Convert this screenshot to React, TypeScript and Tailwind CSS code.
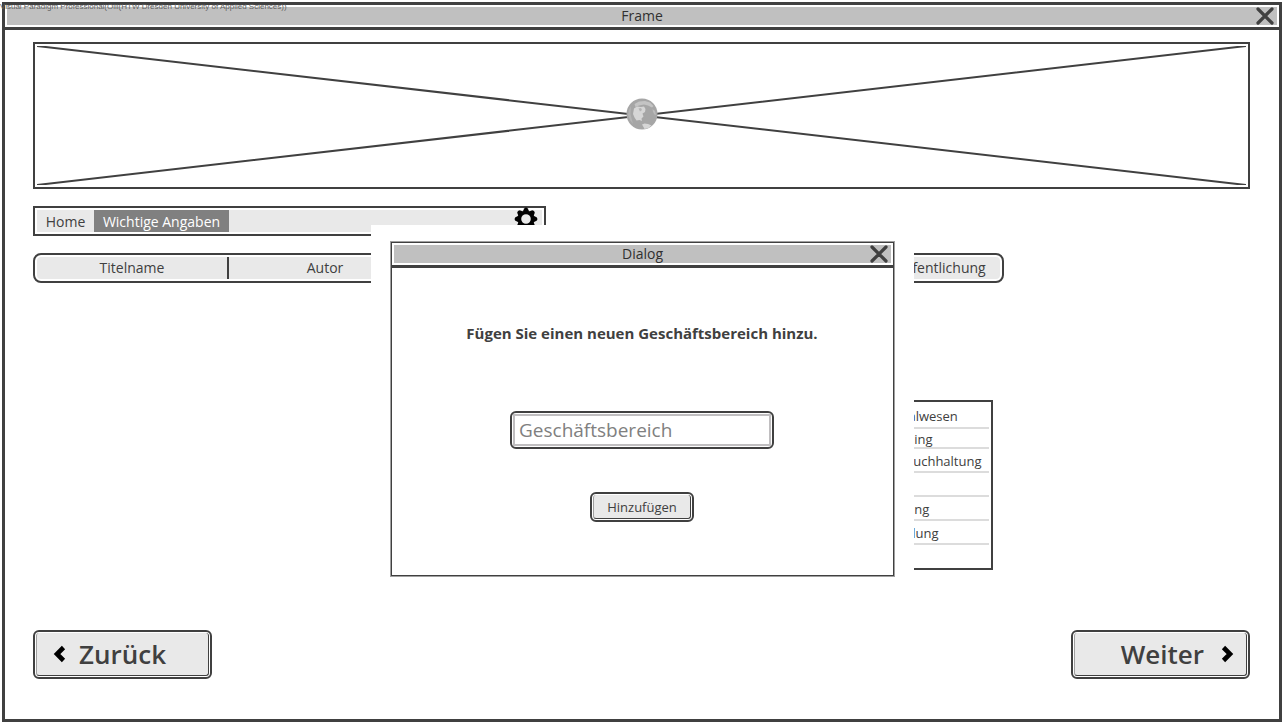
import type { ReactNode } from "react";

const columns = [
  { label: "Titelname", style: "w-[191px]" },
  { label: "Autor", style: "w-[194px] border-l-2" },
  { label: "Verlag", style: "w-[194px] border-l-2" },
  { label: "Jahr", style: "border-l-2" },
  { label: "Veröffentlichung", style: "w-[138px] border-l-2" },
];

const departments = [
  { name: "Personalwesen", style: "h-[27px] border-b-2" },
  { name: "Controlling", style: "h-5 border-b-2" },
  { name: "Finanzbuchhaltung", style: "h-6 border-b-2" },
  { name: "IT", style: "h-6 border-b-2" },
  { name: "Forschung", style: "h-6 border-b-2" },
  { name: "Entwicklung", style: "h-6 border-b-2" },
];

function CloseIcon() {
  return (
    <svg viewBox="0 0 18 18" className="size-[18px]" aria-hidden="true">
      <path d="M2 2 16 16M16 2 2 16" fill="none" stroke="#404040" strokeWidth="3.200" strokeLinecap="round" />
    </svg>
  );
}

function TitleBar({ title }: { title: string }) {
  return (
    <div className="border-b-3 border-[#404040] p-[2px]">
      <div className="grid h-[18px] grid-cols-[1fr_auto_1fr] items-center bg-[#c0c0c0]">
        <h2 className="col-start-2 text-sm leading-[18px] text-[#303030]">{title}</h2>
        <button type="button" aria-label="Schließen" className="mr-[3px] justify-self-end">
          <CloseIcon />
        </button>
      </div>
    </div>
  );
}

function GlobeIcon() {
  return (
    <svg viewBox="0 0 32 32" className="size-8" aria-hidden="true">
      <circle cx="16" cy="16" r="15.5" fill="#a6a6a6" />
      <path d="M8.500 6 13 3.500 19 3 24 4.500 27.500 8 26 9.500 22 7.500 18 6.500 13 7.500 9.500 9Z" fill="#c4c4c4" />
      <path d="M8 10.500 11 8.500 15 9 18 8.500 19.500 11 19 14 16.500 15.500 17.500 18.500 15.500 20.500 16 23 13.500 22 10.500 22.500 8.500 19.500 7 16Z" fill="#d6d6d6" />
      <path d="M12.500 10.500 15 10 16 12 14 13.500Z" fill="#b4b4b4" />
      <path d="M16 26.500 18.500 25.500 22 26 25.500 27.500 22.500 30 18.500 31 17.500 29Z" fill="#d6d6d6" />
      <path d="M26.500 11 29 13 30 17 28.500 16.500 27 14Z" fill="#bcbcbc" />
      <path d="M5 8 3 12 2 17 4 22 7 26 4.500 16Z" fill="#b4b4b4" />
    </svg>
  );
}

function GearIcon() {
  return (
    <svg viewBox="-12 -12 24 24" className="size-6" aria-hidden="true">
      <circle r="6.700" fill="none" stroke="#000" strokeWidth="3.800" />
      {[0, 45, 90, 135, 180, 225, 270, 315].map((angle) => (
        <path key={angle} d="M-3.200-7.500-1.800-10.600Q0-12.200 1.800-10.600L3.200-7.500Z" transform={`rotate(${angle})`} />
      ))}
    </svg>
  );
}

function Chevron({ direction }: { direction: "left" | "right" }) {
  return (
    <svg viewBox="0 0 14 18" className="h-[18px] w-[14px]" aria-hidden="true">
      <path
        d={direction === "left" ? "M10.500 2.500 4 9l6.500 6.500" : "M3.500 2.500 10 9l-6.500 6.500"}
        fill="none"
        stroke="#000"
        strokeWidth="4.600"
      />
    </svg>
  );
}

function SketchButton({ size, children }: { size: string; children: ReactNode }) {
  return (
    <button type="button" className={`rounded-md border-2 border-[#404040] bg-white p-px text-[#404040] ${size}`}>
      <span className="flex size-full items-center rounded-[3px] border border-t-0 border-[#404040] border-l-[#a0a0a0] bg-[#e9e9e9]">
        {children}
      </span>
    </button>
  );
}

function AddDialog() {
  return (
    <div className="absolute inset-x-0 top-[220px] flex justify-center pl-px">
      <div className="w-[543px] bg-white px-5 py-[17px]">
        <section role="dialog" aria-label="Dialog" className="border border-[#404040] bg-white shadow-[0_0_0_1px_#a0a0a0]">
          <TitleBar title="Dialog" />
          <form className="flex flex-col items-center pt-[53px] pr-px pb-[53px]" onSubmit={(e) => e.preventDefault()}>
            <label htmlFor="department" className="text-[15px] leading-6 font-bold whitespace-nowrap">
              Fügen Sie einen neuen Geschäftsbereich hinzu.
            </label>
            <div className="mt-[66px] w-[264px] rounded-md border-2 border-[#404040] p-px">
              <input
                id="department"
                type="text"
                placeholder="Geschäftsbereich"
                className="block h-8 w-full border-2 border-[#c0bec0] px-1 text-[19px] outline-none placeholder:text-[#808080]"
              />
            </div>
            <div className="mt-[43px] flex">
              <SketchButton size="h-[30px] w-[104px]">
                <span className="w-full text-center text-[13px] leading-4">Hinzufügen</span>
              </SketchButton>
            </div>
          </form>
        </section>
      </div>
    </div>
  );
}

export default function App() {
  return (
    <div className="relative flex min-h-screen flex-col overflow-hidden bg-white pt-[2px] pr-1 pb-1 pl-[2px] font-['Open_Sans',sans-serif] text-[#404040]">
      <div className="relative flex flex-1 flex-col border-3 border-[#404040]">
        <TitleBar title="Frame" />
        <main className="flex flex-1 flex-col pt-3 pr-[29px] pb-10 pl-7">
          <div className="relative grid h-[147px] justify-center border-2 border-[#404040] pt-[54px]">
            <svg viewBox="0 0 100 100" preserveAspectRatio="none" className="absolute inset-0 size-full p-[2px]" aria-hidden="true">
              <path d="M0 0 100 100M100 0 0 100" stroke="#404040" strokeWidth="2" vectorEffect="non-scaling-stroke" />
            </svg>
            <div className="relative">
              <GlobeIcon />
            </div>
          </div>

          <nav className="mt-[17px] flex h-[30px] w-[513px] border-2 border-[#404040] p-[2px]">
            <div className="flex h-[22px] flex-1 items-stretch bg-[#e9e9e9] text-sm leading-6">
              <a href="#home" className="w-[57px] text-center">Home</a>
              <a href="#angaben" className="w-[135px] bg-[#808080] text-center text-white">Wichtige Angaben</a>
              <button type="button" aria-label="Einstellungen" className="mr-1 ml-auto flex items-end pb-px">
                <GearIcon />
              </button>
            </div>
          </nav>

          <div className="mt-[17px] w-[971px]">
            <div className="rounded-lg border-2 border-[#404040] p-[2px]">
              <table className="h-[22px] w-full table-fixed border-collapse rounded bg-[#e9e9e9]">
                <thead>
                  <tr>
                    {columns.map((c) => (
                      <th key={c.label} className={`border-[#404040] p-0 text-center text-sm leading-[22px] font-normal ${c.style}`}>
                        {c.label}
                      </th>
                    ))}
                  </tr>
                </thead>
              </table>
            </div>
            <ul className="mt-[117px] mr-[11px] ml-auto h-[170px] w-[135px] border-2 border-[#404040] px-[2px]">
              {departments.map((d) => (
                <li key={d.name} className={`flex items-center border-[#dcdcdc] pt-[2px] pl-1 text-[13px] leading-4 ${d.style}`}>
                  {d.name}
                </li>
              ))}
            </ul>
          </div>

          <div className="mt-auto flex justify-between text-[26px] leading-8 font-semibold">
            <SketchButton size="h-[49px] w-[179px]">
              <span className="flex items-center gap-3 pl-4">
                <Chevron direction="left" />
                Zurück
              </span>
            </SketchButton>
            <SketchButton size="h-[49px] w-[179px]">
              <span className="ml-auto flex items-center gap-4 pr-3">
                Weiter
                <Chevron direction="right" />
              </span>
            </SketchButton>
          </div>
        </main>
        <AddDialog />
      </div>
      <p className="absolute top-0 left-0 font-['Liberation_Sans',sans-serif] text-[8px] leading-[14px] whitespace-nowrap text-[#606060]">
        Visual Paradigm Professional(Olli(HTW Dresden University of Applied Sciences))
      </p>
    </div>
  );
}
